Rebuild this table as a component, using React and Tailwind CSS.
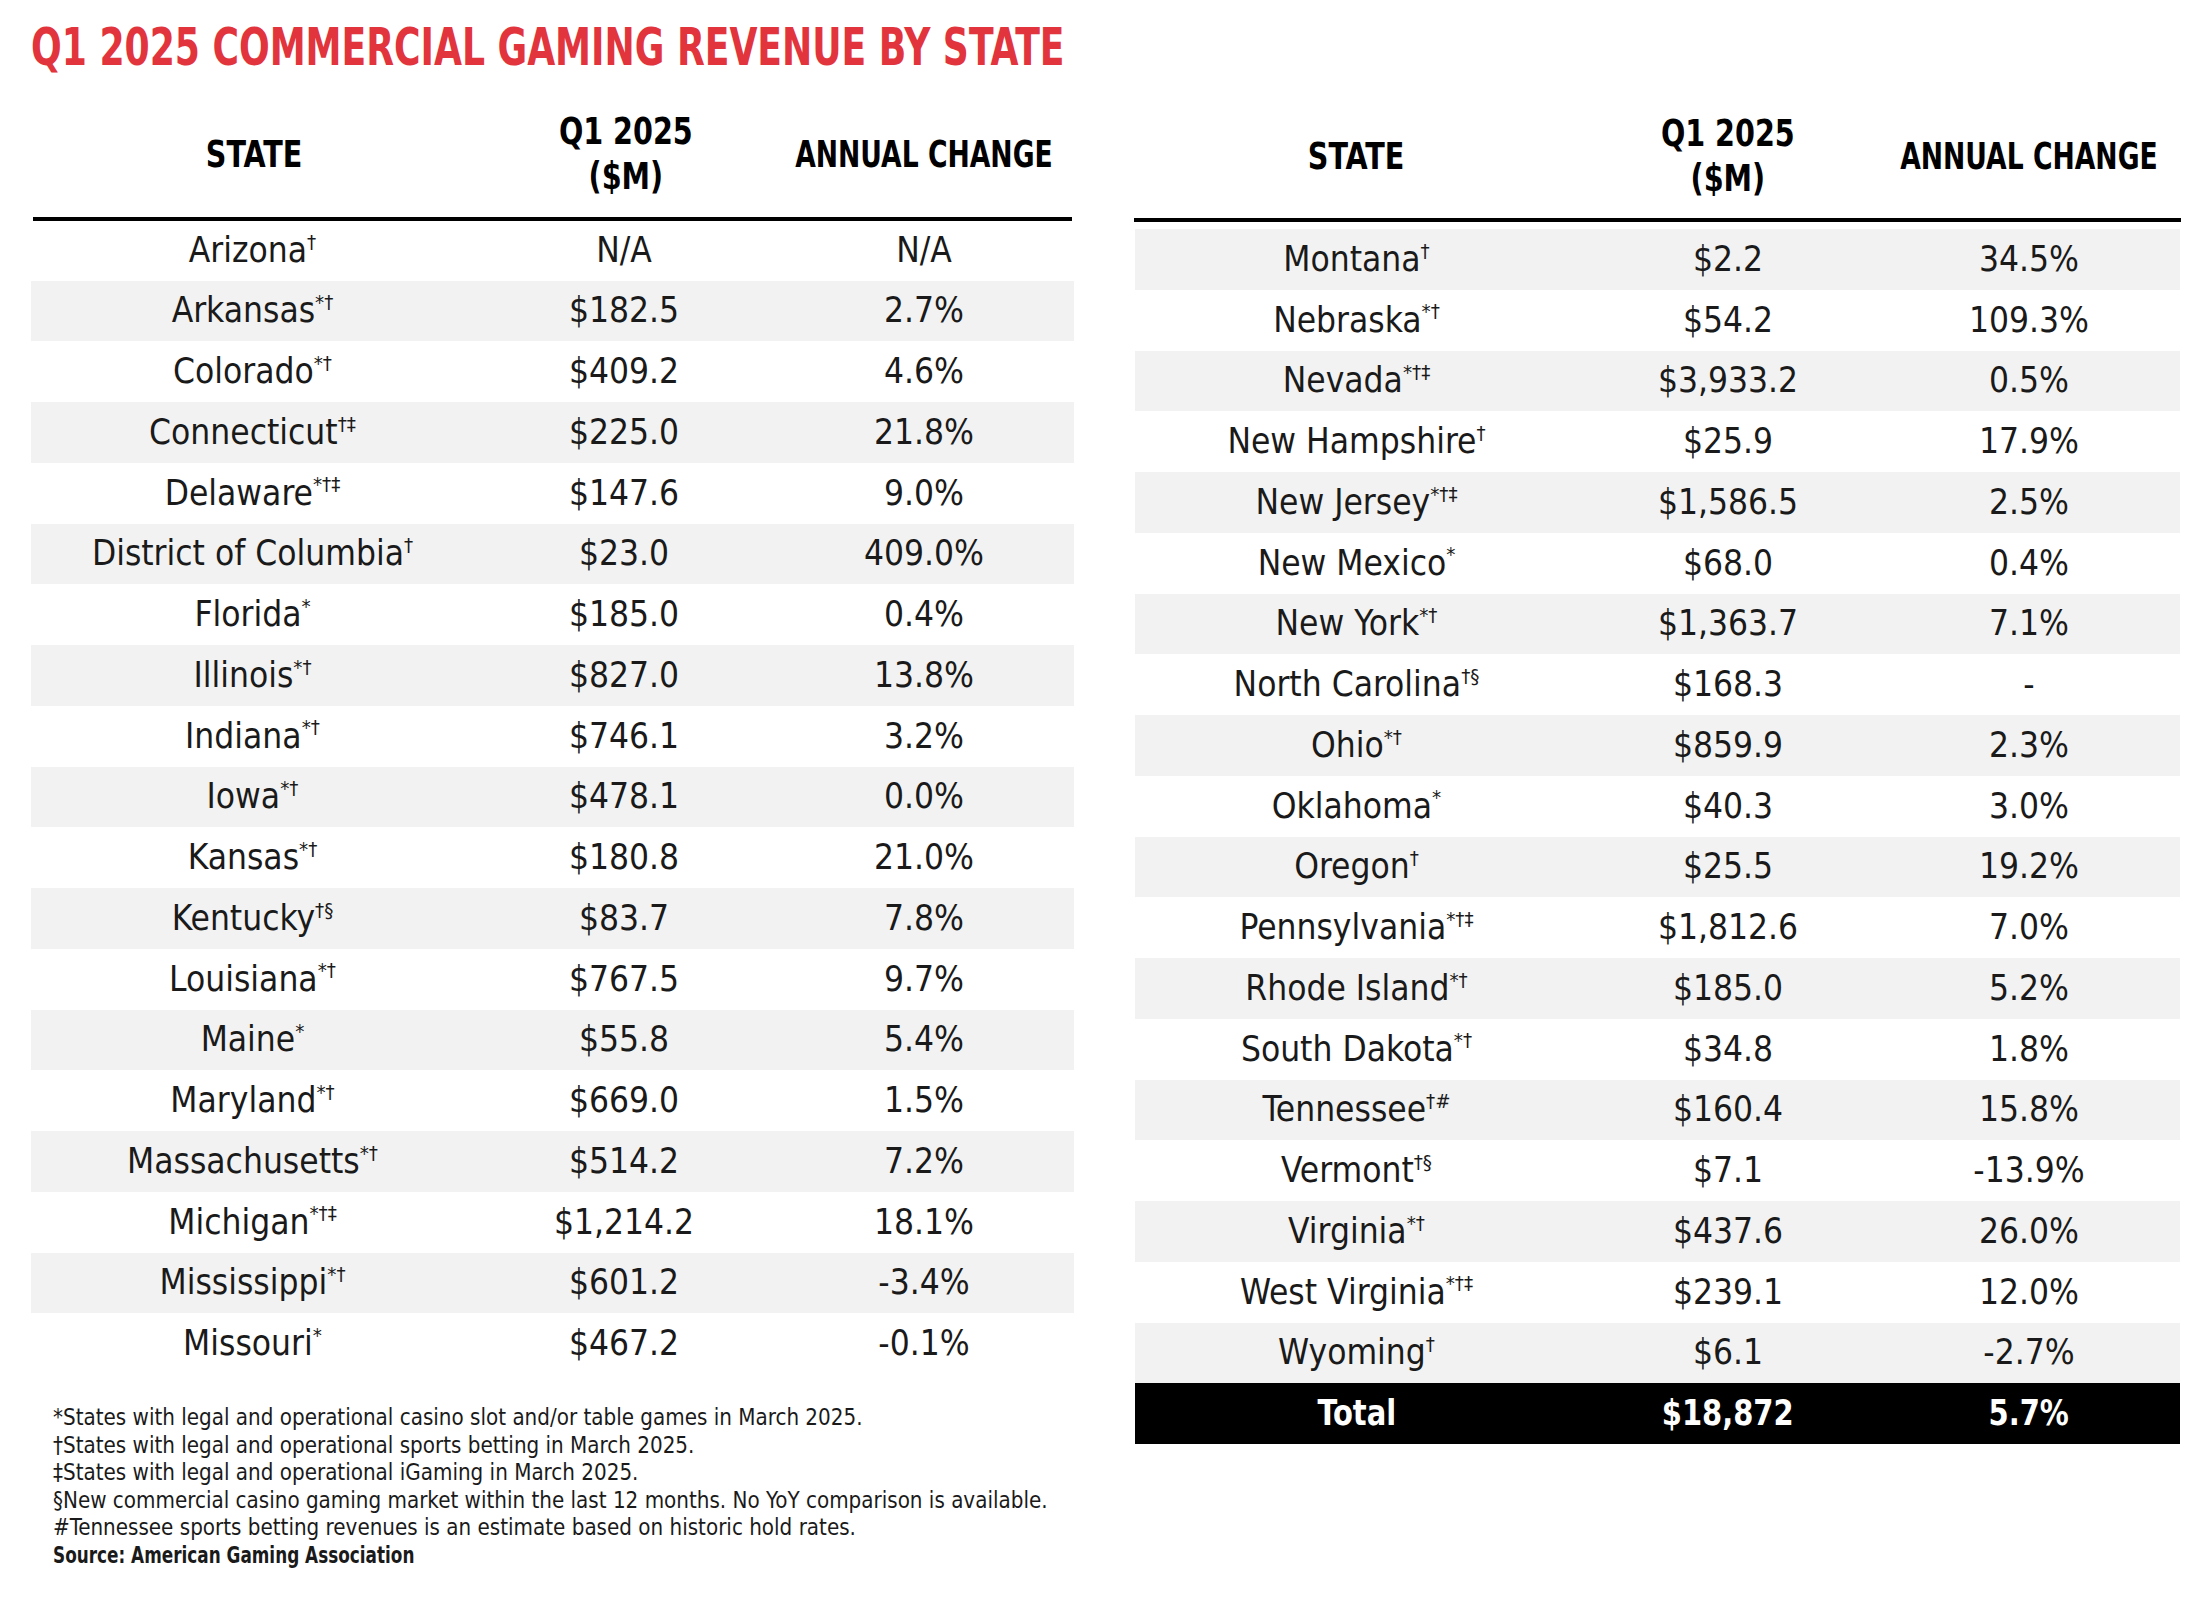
import React from "react";

const FONT = '"Liberation Sans Narrow", "DejaVu Sans Condensed", "Liberation Sans", Arial, sans-serif';

const left = [
  ["Arizona", "†", "N/A", "N/A"],
  ["Arkansas", "*†", "$182.5", "2.7%"],
  ["Colorado", "*†", "$409.2", "4.6%"],
  ["Connecticut", "†‡", "$225.0", "21.8%"],
  ["Delaware", "*†‡", "$147.6", "9.0%"],
  ["District of Columbia", "†", "$23.0", "409.0%"],
  ["Florida", "*", "$185.0", "0.4%"],
  ["Illinois", "*†", "$827.0", "13.8%"],
  ["Indiana", "*†", "$746.1", "3.2%"],
  ["Iowa", "*†", "$478.1", "0.0%"],
  ["Kansas", "*†", "$180.8", "21.0%"],
  ["Kentucky", "†§", "$83.7", "7.8%"],
  ["Louisiana", "*†", "$767.5", "9.7%"],
  ["Maine", "*", "$55.8", "5.4%"],
  ["Maryland", "*†", "$669.0", "1.5%"],
  ["Massachusetts", "*†", "$514.2", "7.2%"],
  ["Michigan", "*†‡", "$1,214.2", "18.1%"],
  ["Mississippi", "*†", "$601.2", "-3.4%"],
  ["Missouri", "*", "$467.2", "-0.1%"],
];

const right = [
  ["Montana", "†", "$2.2", "34.5%"],
  ["Nebraska", "*†", "$54.2", "109.3%"],
  ["Nevada", "*†‡", "$3,933.2", "0.5%"],
  ["New Hampshire", "†", "$25.9", "17.9%"],
  ["New Jersey", "*†‡", "$1,586.5", "2.5%"],
  ["New Mexico", "*", "$68.0", "0.4%"],
  ["New York", "*†", "$1,363.7", "7.1%"],
  ["North Carolina", "†§", "$168.3", "-"],
  ["Ohio", "*†", "$859.9", "2.3%"],
  ["Oklahoma", "*", "$40.3", "3.0%"],
  ["Oregon", "†", "$25.5", "19.2%"],
  ["Pennsylvania", "*†‡", "$1,812.6", "7.0%"],
  ["Rhode Island", "*†", "$185.0", "5.2%"],
  ["South Dakota", "*†", "$34.8", "1.8%"],
  ["Tennessee", "†#", "$160.4", "15.8%"],
  ["Vermont", "†§", "$7.1", "-13.9%"],
  ["Virginia", "*†", "$437.6", "26.0%"],
  ["West Virginia", "*†‡", "$239.1", "12.0%"],
  ["Wyoming", "†", "$6.1", "-2.7%"],
];

function Header() {
  return (
    <div className="grid grid-cols-[443px_300px_minmax(0,1fr)] h-[108px] items-center text-center font-bold text-[37px] leading-[45px] text-black whitespace-nowrap">
      <div className="flex justify-center min-w-0">
        <span className="inline-block shrink-0 scale-x-[0.86]">STATE</span>
      </div>
      <div className="flex justify-center min-w-0">
        <span className="inline-block shrink-0 scale-x-[0.86]">
          Q1 2025
          <br />
          ($M)
        </span>
      </div>
      <div className="flex justify-center min-w-0">
        <span className="inline-block shrink-0 scale-x-[0.8]">ANNUAL CHANGE</span>
      </div>
    </div>
  );
}

function Row({ r, gray, first }) {
  return (
    <div
      className={
        "grid grid-cols-[443px_300px_minmax(0,1fr)] items-center text-center text-[35px] text-[#1a1a1a] " +
        (gray ? "bg-[#f2f2f2] " : "bg-white ") +
        (first ? "h-[59.5px]" : "h-[60.75px]")
      }
    >
      <div className="leading-none">
        {r[0]}
        <sup className="relative top-[-0.65em] text-[0.58em] align-baseline">{r[1]}</sup>
      </div>
      <div className="leading-none">{r[2]}</div>
      <div className="leading-none">{r[3]}</div>
    </div>
  );
}

export default function App() {
  return (
    <div className="w-[2186px] h-[1599px] bg-white pl-[31px] overflow-hidden" style={{ fontFamily: FONT }}>
      <div className="pt-[21px] h-[73px] text-[52px] leading-[52px] font-bold text-[#e2343c] whitespace-nowrap">
        <span className="inline-block origin-left scale-x-[0.772]">Q1 2025 COMMERCIAL GAMING REVENUE BY STATE</span>
      </div>
      <div className="flex gap-[61px] items-start">
        <div className="w-[1043px]">
          <div className="pt-[27px] px-[2px]">
            <Header />
          </div>
          <div className="mt-[9px] mx-[2px] h-[4px] bg-black" />
          {left.map((r, i) => (
            <Row key={r[0]} r={r} gray={i % 2 === 1} first={i === 0} />
          ))}
          <div className="mt-[30px] pl-[22px] text-[22.2px] leading-[27.6px] text-[#1a1a1a] whitespace-nowrap">
            <div>*States with legal and operational casino slot and/or table games in March 2025.</div>
            <div>†States with legal and operational sports betting in March 2025.</div>
            <div>‡States with legal and operational iGaming in March 2025.</div>
            <div>§New commercial casino gaming market within the last 12 months. No YoY comparison is available.</div>
            <div>#Tennessee sports betting revenues is an estimate based on historic hold rates.</div>
            <div className="font-bold">
              <span className="inline-block origin-left scale-x-[0.845]">Source: American Gaming Association</span>
            </div>
          </div>
        </div>
        <div className="w-[1045px]">
          <div className="pt-[29px]">
            <Header />
          </div>
          <div className="mt-[8px] -mx-[1px] h-[4px] bg-black" />
          <div className="mt-[7px]">
            {right.map((r, i) => (
              <Row key={r[0]} r={r} gray={i % 2 === 0} />
            ))}
            <div className="grid grid-cols-[443px_300px_minmax(0,1fr)] h-[60.75px] items-center text-center text-[35px] font-bold bg-black text-white">
              <div className="leading-none">
                <span className="inline-block scale-x-[0.92]">Total</span>
              </div>
              <div className="leading-none">
                <span className="inline-block scale-x-[0.92]">$18,872</span>
              </div>
              <div className="leading-none">
                <span className="inline-block scale-x-[0.92]">5.7%</span>
              </div>
            </div>
          </div>
        </div>
      </div>
    </div>
  );
}
